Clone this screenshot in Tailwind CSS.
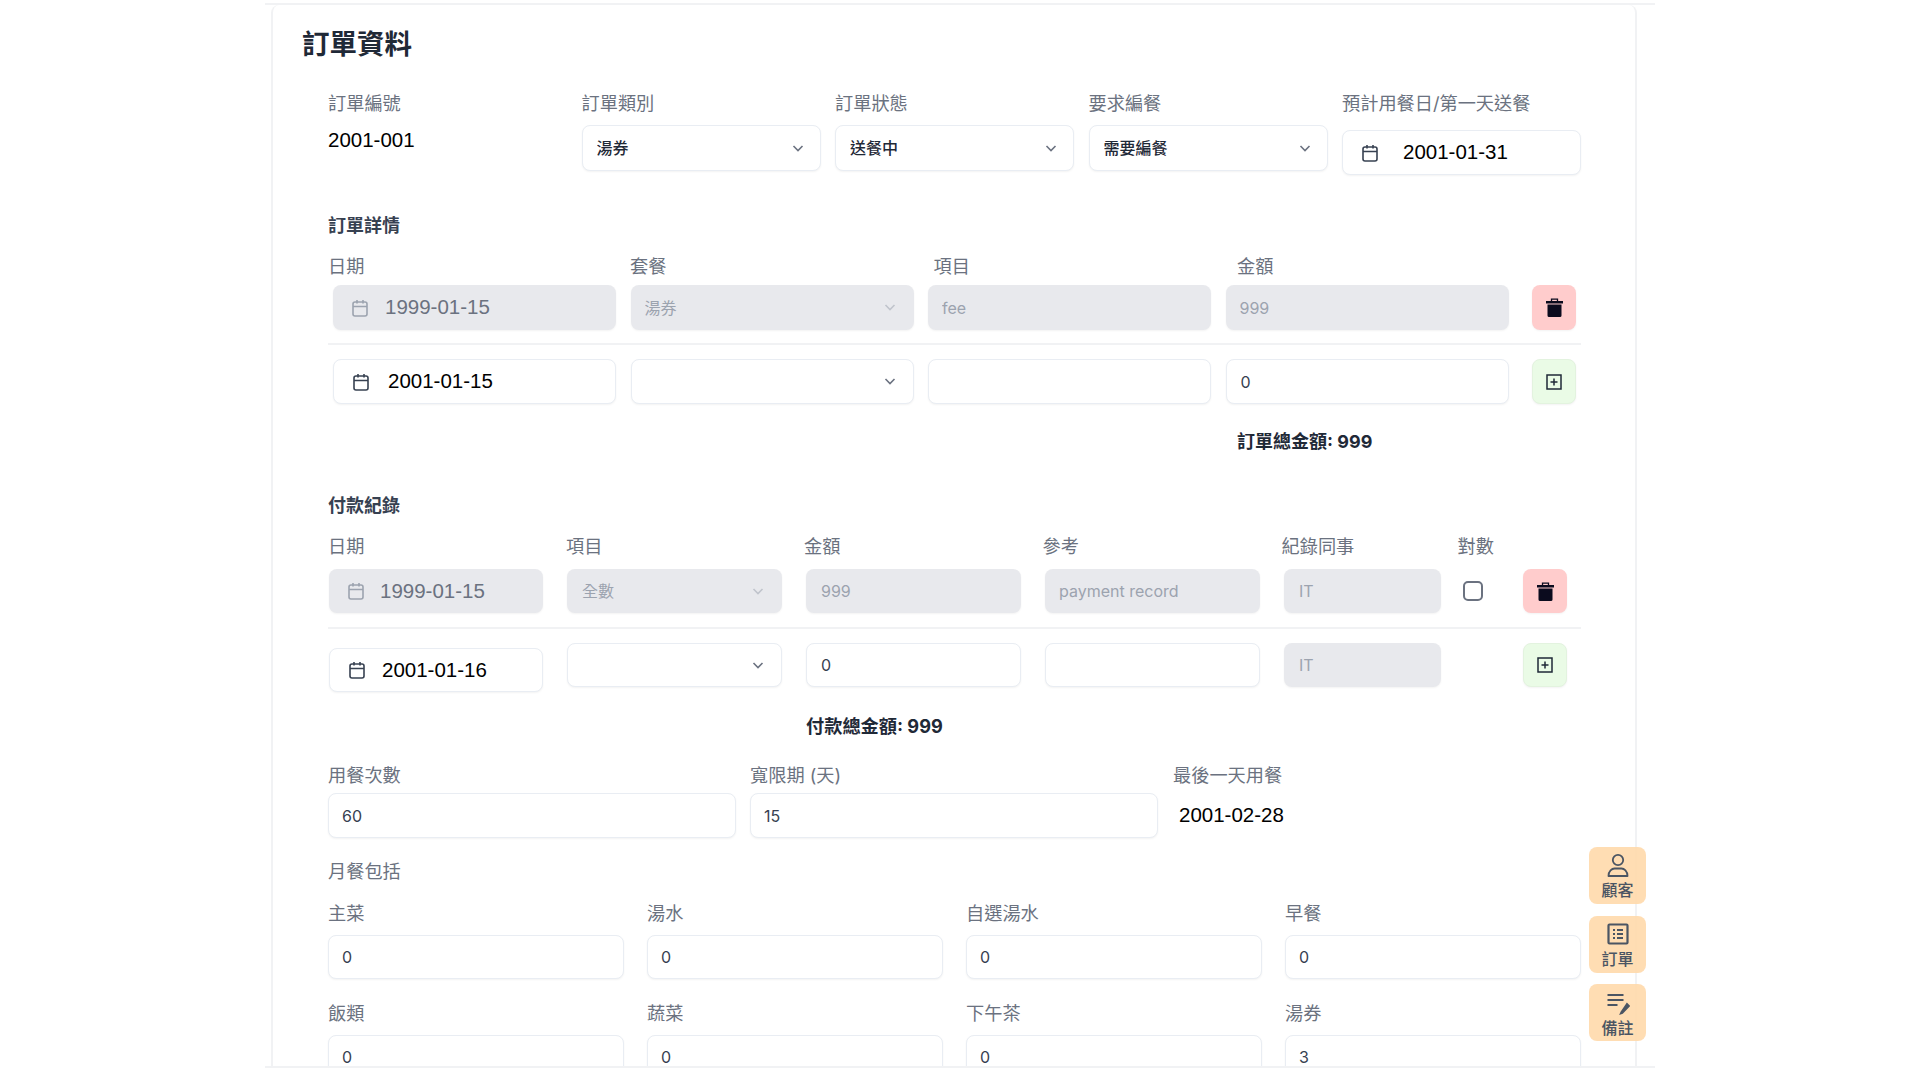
<!DOCTYPE html>
<html lang="zh-Hant">
<head>
  <meta charset="UTF-8">
  <meta name="viewport" content="width=device-width, initial-scale=1.0">
  <title>訂單資料</title>
  <script src="https://cdn.jsdelivr.net/npm/@tailwindcss/browser@4"></script>
</head>
<body class="relative h-screen overflow-hidden bg-white font-['Inter','Noto_Sans_CJK_TC',sans-serif] text-[#374151]">

<main class="ml-[265px] mt-[3px] h-[1065px] w-[1390px] overflow-hidden border-y-2 border-[#f1f2f4] pl-[6px]">
  <div class="h-full w-[1366px] rounded-t-lg border-x-2 border-[#f1f2f4] pl-[55px] pt-[21px]">
    <h1 class="-ml-[26px] text-[27.5px] font-bold leading-[36px] text-[#1f2937]">訂單資料</h1>

    <!-- Order header -->
    <div class="mt-[29px] grid w-[1253px] grid-cols-[repeat(5,239px)] gap-x-[14.5px] text-[18.2px] leading-[24px] text-[#6b7280]">
      <div>
        <label class="block">訂單編號</label>
        <p class="mt-[13px] font-['Liberation_Sans','Noto_Sans_CJK_TC',sans-serif] text-[20.5px] text-black">2001-001</p>
      </div>
      <div>
        <label class="block">訂單類別</label>
        <div class="relative mt-[10px]">
          <select class="h-[46px] w-full appearance-none rounded-lg border border-[#e9edf3] bg-white px-[14px] text-[16px] font-medium text-[#1f2937] shadow-xs"><option>湯券</option></select>
          <svg class="absolute right-[16px] top-[16px] size-[14px] text-[#6b7280]" viewBox="0 0 14 14" fill="none" stroke="currentColor" stroke-width="1.6"><path d="M2.5 5l4.5 4.5L11.5 5"/></svg>
        </div>
      </div>
      <div>
        <label class="block">訂單狀態</label>
        <div class="relative mt-[10px]">
          <select class="h-[46px] w-full appearance-none rounded-lg border border-[#e9edf3] bg-white px-[14px] text-[16px] font-medium text-[#1f2937] shadow-xs"><option>送餐中</option></select>
          <svg class="absolute right-[16px] top-[16px] size-[14px] text-[#6b7280]" viewBox="0 0 14 14" fill="none" stroke="currentColor" stroke-width="1.6"><path d="M2.5 5l4.5 4.5L11.5 5"/></svg>
        </div>
      </div>
      <div>
        <label class="block">要求編餐</label>
        <div class="relative mt-[10px]">
          <select class="h-[46px] w-full appearance-none rounded-lg border border-[#e9edf3] bg-white px-[14px] text-[16px] font-medium text-[#1f2937] shadow-xs"><option>需要編餐</option></select>
          <svg class="absolute right-[16px] top-[16px] size-[14px] text-[#6b7280]" viewBox="0 0 14 14" fill="none" stroke="currentColor" stroke-width="1.6"><path d="M2.5 5l4.5 4.5L11.5 5"/></svg>
        </div>
      </div>
      <div>
        <label class="block whitespace-nowrap">預計用餐日/第一天送餐</label>
        <div class="mt-[15px] flex h-[45px] items-center gap-[23px] rounded-lg border border-[#e9edf3] bg-white pl-[17px] shadow-xs">
          <svg class="size-[20px] shrink-0 text-[#374151]" viewBox="0 0 20 20" fill="none" stroke="currentColor" stroke-width="1.6"><rect x="3" y="4" width="14" height="14" rx="2"/><path d="M3 8.5h14M7 2v3.5M13 2v3.5"/></svg>
          <input value="2001-01-31" class="-mt-[2px] w-full min-w-0 bg-transparent font-['Liberation_Sans',sans-serif] text-[20.5px] text-black outline-none">
        </div>
      </div>
    </div>

    <!-- Order details -->
    <h2 class="mt-[39px] text-[18px] font-bold leading-[24px] text-[#374151]">訂單詳情</h2>
    <div class="mt-[16px] grid grid-cols-[302px_303.5px_303.5px_auto] text-[18.2px] leading-[24px] text-[#6b7280]">
      <label>日期</label><label>套餐</label><label>項目</label><label>金額</label>
    </div>
    <div class="ml-[5px] mt-[7px] grid grid-cols-[repeat(4,283px)_44px] gap-x-[14.5px]">
      <div class="flex h-[45px] items-center gap-[15px] rounded-lg bg-[#e8e9ed] pl-[17px] shadow-xs">
        <svg class="size-[20px] shrink-0 text-[#9ca3af]" viewBox="0 0 20 20" fill="none" stroke="currentColor" stroke-width="1.6"><rect x="3" y="4" width="14" height="14" rx="2"/><path d="M3 8.5h14M7 2v3.5M13 2v3.5"/></svg>
        <input disabled value="1999-01-15" class="w-full min-w-0 bg-transparent font-['Liberation_Sans',sans-serif] text-[20.5px] text-[#6b7280] outline-none">
      </div>
      <div class="relative">
        <select disabled class="h-[45px] w-full appearance-none rounded-lg bg-[#e8e9ed] px-[14px] text-[16px] text-[#9ca3af] opacity-100 shadow-xs"><option>湯券</option></select>
        <svg class="absolute right-[17px] top-[15px] size-[14px] text-[#c0c4cc]" viewBox="0 0 14 14" fill="none" stroke="currentColor" stroke-width="1.6"><path d="M2.5 5l4.5 4.5L11.5 5"/></svg>
      </div>
      <input disabled value="fee" class="h-[45px] w-full rounded-lg bg-[#e8e9ed] px-[14px] text-[16px] text-[#9ca3af] shadow-xs">
      <input disabled value="999" class="h-[45px] w-full rounded-lg bg-[#e8e9ed] px-[14px] text-[16px] text-[#9ca3af] shadow-xs">
      <button class="ml-[9px] flex h-[45px] w-[44px] items-center justify-center rounded-lg bg-[#ffcccc] shadow-xs">
        <svg class="h-[19px] w-[17px] text-[#0b0b1e]" viewBox="0 0 17 19" fill="currentColor"><path d="M5.5 3V1.2h6V3" fill="none" stroke="currentColor" stroke-width="1.3"/><rect x="0" y="3" width="17" height="2.5"/><path d="M1.5 6.5h14V17.5A1.5 1.5 0 0 1 14 19H3A1.5 1.5 0 0 1 1.5 17.5z"/></svg>
      </button>
    </div>
    <div class="mt-[13px] h-[2px] w-[1253px] bg-[#f1f2f4]"></div>
    <div class="ml-[5px] mt-[14px] grid grid-cols-[repeat(4,283px)_44px] gap-x-[14.5px]">
      <div class="flex h-[45px] items-center gap-[17px] rounded-lg border border-[#e9edf3] bg-white pl-[17px] shadow-xs">
        <svg class="size-[20px] shrink-0 text-[#374151]" viewBox="0 0 20 20" fill="none" stroke="currentColor" stroke-width="1.6"><rect x="3" y="4" width="14" height="14" rx="2"/><path d="M3 8.5h14M7 2v3.5M13 2v3.5"/></svg>
        <input value="2001-01-15" class="w-full min-w-0 bg-transparent font-['Liberation_Sans',sans-serif] text-[20.5px] text-black outline-none">
      </div>
      <div class="relative">
        <select class="h-[45px] w-full appearance-none rounded-lg border border-[#e9edf3] bg-white px-[14px] text-[16px] shadow-xs"><option></option></select>
        <svg class="absolute right-[17px] top-[15px] size-[14px] text-[#6b7280]" viewBox="0 0 14 14" fill="none" stroke="currentColor" stroke-width="1.6"><path d="M2.5 5l4.5 4.5L11.5 5"/></svg>
      </div>
      <input class="h-[45px] w-full rounded-lg border border-[#e9edf3] bg-white px-[14px] text-[16px] shadow-xs">
      <input value="0" class="h-[45px] w-full rounded-lg border border-[#e9edf3] bg-white px-[14px] text-[16px] shadow-xs">
      <button class="ml-[9px] flex h-[45px] w-[44px] items-center justify-center rounded-lg border border-[#e3f3df] bg-[#eafbe6] shadow-xs">
        <svg class="size-[16px] text-[#1f2937]" viewBox="0 0 16 16" fill="none" stroke="currentColor" stroke-width="1.5"><rect x="1" y="1" width="14" height="14"/><path d="M8 4.5v7M4.5 8h7"/></svg>
      </button>
    </div>
    <p class="ml-[909px] mt-[26px] text-[18px] font-bold leading-[24px] text-[#1f2937]">訂單總金額: 999</p>

    <!-- Payment records -->
    <h2 class="mt-[40px] text-[18px] font-bold leading-[24px] text-[#374151]">付款紀錄</h2>
    <div class="mt-[16px] grid grid-cols-[238px_238px_238.5px_239px_176px_auto] text-[18.2px] leading-[24px] text-[#6b7280]">
      <label>日期</label><label>項目</label><label>金額</label><label>參考</label><label>紀錄同事</label><label>對數</label>
    </div>
    <div class="ml-[1px] mt-[11px] grid grid-cols-[214px_215px_215px_215px_157px_20px_44px] items-center gap-x-[24px]">
      <div class="flex h-[44px] items-center gap-[14px] rounded-lg bg-[#e8e9ed] pl-[17px] shadow-xs">
        <svg class="size-[20px] shrink-0 text-[#9ca3af]" viewBox="0 0 20 20" fill="none" stroke="currentColor" stroke-width="1.6"><rect x="3" y="4" width="14" height="14" rx="2"/><path d="M3 8.5h14M7 2v3.5M13 2v3.5"/></svg>
        <input disabled value="1999-01-15" class="w-full min-w-0 bg-transparent font-['Liberation_Sans',sans-serif] text-[20.5px] text-[#6b7280] outline-none">
      </div>
      <div class="relative">
        <select disabled class="h-[44px] w-full appearance-none rounded-lg bg-[#e8e9ed] px-[15px] text-[16px] text-[#9ca3af] opacity-100 shadow-xs"><option>全數</option></select>
        <svg class="absolute right-[17px] top-[15px] size-[14px] text-[#c0c4cc]" viewBox="0 0 14 14" fill="none" stroke="currentColor" stroke-width="1.6"><path d="M2.5 5l4.5 4.5L11.5 5"/></svg>
      </div>
      <input disabled value="999" class="h-[44px] w-full rounded-lg bg-[#e8e9ed] px-[15px] text-[16px] text-[#9ca3af] shadow-xs">
      <input disabled value="payment record" class="h-[44px] w-full rounded-lg bg-[#e8e9ed] px-[14px] text-[16px] text-[#9ca3af] shadow-xs">
      <input disabled value="IT" class="h-[44px] w-full rounded-lg bg-[#e8e9ed] px-[15px] text-[16px] text-[#9ca3af] shadow-xs">
      <input type="checkbox" class="-ml-[2px] size-[20px] appearance-none rounded-[5px] border-2 border-[#6b7280] bg-white">
      <button class="ml-[14px] flex h-[44px] w-[44px] items-center justify-center rounded-lg bg-[#ffcccc] shadow-xs">
        <svg class="h-[19px] w-[17px] text-[#0b0b1e]" viewBox="0 0 17 19" fill="currentColor"><path d="M5.5 3V1.2h6V3" fill="none" stroke="currentColor" stroke-width="1.3"/><rect x="0" y="3" width="17" height="2.5"/><path d="M1.5 6.5h14V17.5A1.5 1.5 0 0 1 14 19H3A1.5 1.5 0 0 1 1.5 17.5z"/></svg>
      </button>
    </div>
    <div class="mt-[14px] h-[2px] w-[1253px] bg-[#f1f2f4]"></div>
    <div class="ml-[1px] mt-[14px] grid grid-cols-[214px_215px_215px_215px_157px_20px_44px] items-start gap-x-[24px]">
      <div class="mt-[5px] flex h-[44px] items-center gap-[15px] rounded-lg border border-[#e9edf3] bg-white pl-[17px] shadow-xs">
        <svg class="size-[20px] shrink-0 text-[#374151]" viewBox="0 0 20 20" fill="none" stroke="currentColor" stroke-width="1.6"><rect x="3" y="4" width="14" height="14" rx="2"/><path d="M3 8.5h14M7 2v3.5M13 2v3.5"/></svg>
        <input value="2001-01-16" class="w-full min-w-0 bg-transparent font-['Liberation_Sans',sans-serif] text-[20.5px] text-black outline-none">
      </div>
      <div class="relative">
        <select class="h-[44px] w-full appearance-none rounded-lg border border-[#e9edf3] bg-white px-[15px] text-[16px] shadow-xs"><option></option></select>
        <svg class="absolute right-[17px] top-[15px] size-[14px] text-[#6b7280]" viewBox="0 0 14 14" fill="none" stroke="currentColor" stroke-width="1.6"><path d="M2.5 5l4.5 4.5L11.5 5"/></svg>
      </div>
      <input value="0" class="h-[44px] w-full rounded-lg border border-[#e9edf3] bg-white px-[14px] text-[16px] shadow-xs">
      <input class="h-[44px] w-full rounded-lg border border-[#e9edf3] bg-white px-[14px] text-[16px] shadow-xs">
      <input disabled value="IT" class="h-[44px] w-full rounded-lg bg-[#e8e9ed] px-[15px] text-[16px] text-[#9ca3af] shadow-xs">
      <span></span>
      <button class="ml-[14px] flex h-[44px] w-[44px] items-center justify-center rounded-lg border border-[#e3f3df] bg-[#eafbe6] shadow-xs">
        <svg class="size-[16px] text-[#1f2937]" viewBox="0 0 16 16" fill="none" stroke="currentColor" stroke-width="1.5"><rect x="1" y="1" width="14" height="14"/><path d="M8 4.5v7M4.5 8h7"/></svg>
      </button>
    </div>
    <p class="ml-[478px] mt-[22px] text-[18.2px] font-bold leading-[24px] text-[#1f2937]">付款總金額: 999</p>

    <!-- Meal plan -->
    <div class="mt-[25px] grid w-[1253px] grid-cols-[repeat(3,408px)] gap-x-[14px] text-[18.2px] leading-[24px] text-[#6b7280]">
      <div>
        <label class="block">用餐次數</label>
        <input value="60" class="mt-[6px] h-[45px] w-full rounded-lg border border-[#e9edf3] bg-white px-[13px] text-[16px] text-[#374151] shadow-xs">
      </div>
      <div>
        <label class="block">寬限期 (天)</label>
        <input value="15" class="mt-[6px] h-[45px] w-full rounded-lg border border-[#e9edf3] bg-white px-[13px] text-[16px] text-[#374151] shadow-xs">
      </div>
      <div>
        <label class="block pl-[1px]">最後一天用餐</label>
        <p class="mt-[16px] pl-[7px] font-['Liberation_Sans',sans-serif] text-[20.5px] text-black">2001-02-28</p>
      </div>
    </div>

    <p class="mt-[21px] text-[18.2px] leading-[24px] text-[#6b7280]">月餐包括</p>
    <div class="mt-[18px] grid w-[1253px] grid-cols-[repeat(4,296px)] gap-x-[23px] gap-y-[22px] text-[18.2px] leading-[24px] text-[#6b7280]">
      <div><label class="block">主菜</label><input value="0" class="mt-[10px] h-[44px] w-full rounded-lg border border-[#e9edf3] bg-white px-[13px] text-[16px] text-[#374151] shadow-xs"></div>
      <div><label class="block">湯水</label><input value="0" class="mt-[10px] h-[44px] w-full rounded-lg border border-[#e9edf3] bg-white px-[13px] text-[16px] text-[#374151] shadow-xs"></div>
      <div><label class="block">自選湯水</label><input value="0" class="mt-[10px] h-[44px] w-full rounded-lg border border-[#e9edf3] bg-white px-[13px] text-[16px] text-[#374151] shadow-xs"></div>
      <div><label class="block">早餐</label><input value="0" class="mt-[10px] h-[44px] w-full rounded-lg border border-[#e9edf3] bg-white px-[13px] text-[16px] text-[#374151] shadow-xs"></div>
      <div><label class="block">飯類</label><input value="0" class="mt-[10px] h-[44px] w-full rounded-lg border border-[#e9edf3] bg-white px-[13px] text-[16px] text-[#374151] shadow-xs"></div>
      <div><label class="block">蔬菜</label><input value="0" class="mt-[10px] h-[44px] w-full rounded-lg border border-[#e9edf3] bg-white px-[13px] text-[16px] text-[#374151] shadow-xs"></div>
      <div><label class="block">下午茶</label><input value="0" class="mt-[10px] h-[44px] w-full rounded-lg border border-[#e9edf3] bg-white px-[13px] text-[16px] text-[#374151] shadow-xs"></div>
      <div><label class="block">湯券</label><input value="3" class="mt-[10px] h-[44px] w-full rounded-lg border border-[#e9edf3] bg-white px-[13px] text-[16px] text-[#374151] shadow-xs"></div>
    </div>
  </div>
</main>

<!-- Floating shortcuts -->
<nav class="absolute left-[1589px] top-[847px] flex flex-col gap-[11.5px] text-[16px] font-medium leading-[20px] text-[#4b5563]">
  <a class="flex h-[57px] w-[57px] flex-col items-center rounded-lg bg-[#ffd9ab]/90 pt-[6px]">
    <svg class="size-[24px]" viewBox="0 0 24 24" fill="none" stroke="currentColor" stroke-width="1.8"><circle cx="12" cy="7" r="5.2"/><path d="M2.5 23c0-5 3.5-7.5 6-7.5h7c2.5 0 6 2.5 6 7.5z" stroke-linejoin="round"/></svg>
    <span class="mt-[3px]">顧客</span>
  </a>
  <a class="flex h-[57px] w-[57px] flex-col items-center rounded-lg bg-[#ffd9ab]/90 pt-[6px]">
    <svg class="size-[24px]" viewBox="0 0 24 24" fill="none" stroke="currentColor" stroke-width="2.2"><rect x="2.5" y="2.5" width="19" height="19" rx="1"/><path d="M7 8h2M11 8h6M7 12h2M11 12h6M7 16h2M11 16h6"/></svg>
    <span class="mt-[3px]">訂單</span>
  </a>
  <a class="flex h-[57px] w-[57px] flex-col items-center rounded-lg bg-[#ffd9ab]/90 pt-[7px]">
    <svg class="size-[24px]" viewBox="0 0 24 24" fill="none" stroke="currentColor" stroke-width="2.2"><path d="M1.5 4h16M1.5 9h16M1.5 14h10"/><path d="M15.5 21l-.7 1.5 1.5-.5L23 15l-2-2z" fill="currentColor" stroke-width="1.8"/></svg>
    <span class="mt-[3px]">備註</span>
  </a>
</nav>

</body>
</html>
